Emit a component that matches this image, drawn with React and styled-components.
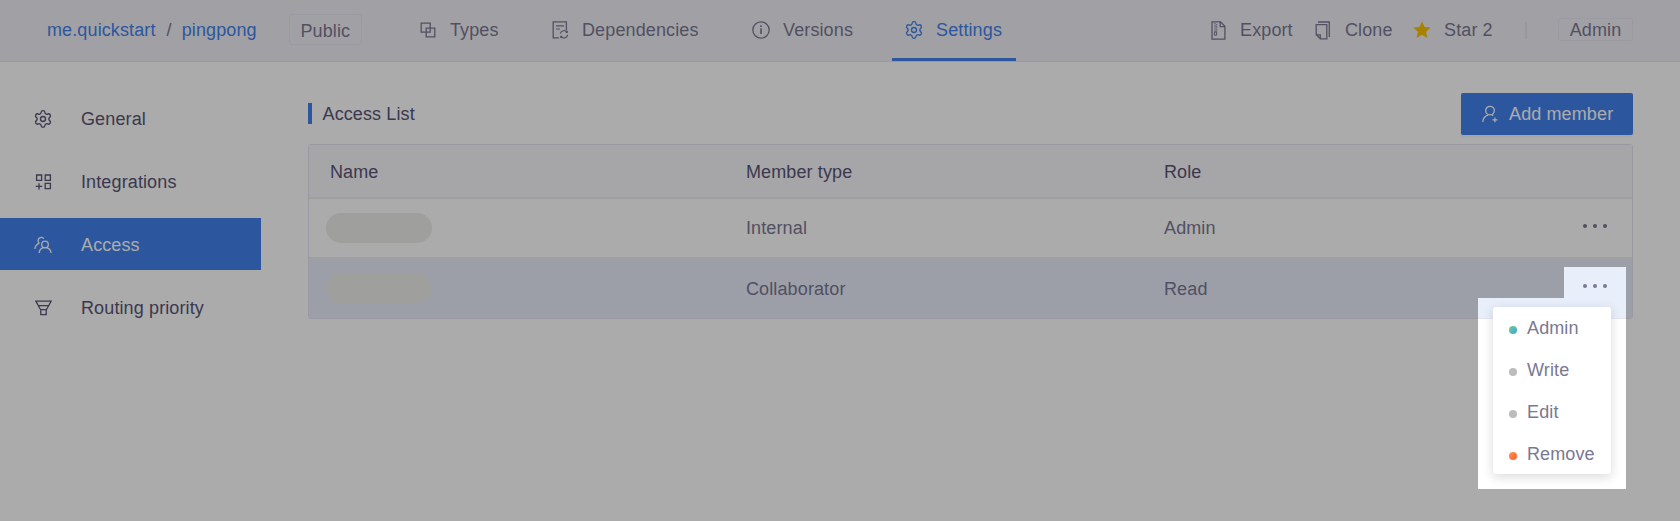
import React from "react";
import styled, { createGlobalStyle, css } from "styled-components";
import { Settings } from "lucide-react";

const Global = createGlobalStyle`
  * { box-sizing: border-box; }
  body {
    margin: 0;
    background: #fff;
    overflow: hidden;
    font-family: "Liberation Sans", Arial, sans-serif;
    font-size: 18px;
    line-height: 20px;
    letter-spacing: 0.12px;
    color: #7a7892;
  }
`;

const Page = styled.div`
  position: relative;
  width: 1680px;
  height: 521px;
  display: flex;
  flex-direction: column;
  white-space: nowrap;
`;

/* Header */
const Header = styled.header`
  display: flex;
  align-items: stretch;
  height: 62px;
  flex: none;
  background: #f1f0f7;
  border-bottom: 1px solid #e6e4f2;
`;

const Breadcrumb = styled.div`
  display: flex;
  align-items: center;
  width: 405px;
  padding: 0 0 1px 47px;
`;

const Crumb = styled.span`
  color: #4282ec;
`;

const Slash = styled.span`
  padding: 0 10px 0 11px;
`;

const Tag = styled.span`
  display: flex;
  align-items: center;
  justify-content: center;
  width: ${(p) => p.$w}px;
  height: ${(p) => p.$h}px;
  margin-bottom: 1px;
  padding-top: 1px;
  border: 1px solid #e7e5f1;
  border-radius: 3px;
`;

const PublicTag = styled(Tag)`
  margin-left: 32px;
  padding-top: 3px;
`;

const Tabs = styled.nav`
  display: flex;
  gap: 25px;
`;

const Tab = styled.a`
  display: flex;
  align-items: center;
  gap: 13px;
  width: ${(p) => p.$w}px;
  padding: 2px 0 0 14px;
  border-bottom: 3px solid transparent;
  ${(p) =>
    p.$active &&
    css`
      padding-left: 13px;
      color: #4282ec;
      border-bottom-color: #4282ec;
    `}
`;

const IconSlot = styled.span`
  display: flex;
  justify-content: center;
  width: 18px;
  flex: none;

  svg {
    flex: none;
  }
`;

const Actions = styled.div`
  display: flex;
  align-items: center;
  margin-left: auto;
  padding: 0 47px 1px 0;
`;

const Action = styled.a`
  display: flex;
  align-items: center;
  gap: 13px;
  width: ${(p) => p.$w}px;
`;

const Divider = styled.span`
  width: 2px;
  height: 17px;
  margin-right: 31px;
  background: #e4e3ea;
`;

/* Body */
const Body = styled.div`
  display: flex;
  flex: 1;
`;

const Sidebar = styled.aside`
  display: flex;
  flex-direction: column;
  gap: 11px;
  width: 261px;
  padding-top: 30px;
`;

const SideItem = styled.a`
  display: flex;
  align-items: center;
  gap: 29px;
  height: 52px;
  padding: 2px 0 0 34px;
  color: ${(p) => (p.$active ? "#fff" : "#585477")};
  background: ${(p) => (p.$active ? "#4282ec" : "transparent")};
`;

const Main = styled.main`
  flex: 1;
  padding: 31px 47px 0 47px;
`;

const TitleBar = styled.div`
  display: flex;
  align-items: flex-start;
  justify-content: space-between;
  height: 42px;
  margin-bottom: 9px;
`;

const Title = styled.h1`
  margin: 10px 0 0;
  font-size: 18px;
  font-weight: 400;
  line-height: 20px;
  padding: 1px 0 0 10.5px;
  border-left: 4px solid #4282ec;
  color: #585477;
`;

const AddButton = styled.button`
  display: flex;
  align-items: center;
  gap: 10px;
  width: 172px;
  height: 42px;
  padding: 0 0 0 20px;
  border: 0;
  border-radius: 2px;
  background: #4282ec;
  box-shadow: 0 2px 2px rgba(0, 0, 0, 0.04);
  color: #fff;
  font: inherit;
  letter-spacing: inherit;
`;

const Table = styled.div`
  border: 1px solid #e6e4f2;
  border-radius: 3px;
`;

const Row = styled.div`
  display: grid;
  grid-template-columns: 416px 418px 1fr 58px;
  align-items: center;
  height: ${(p) => p.$h}px;
  padding: ${(p) => p.$top || 0}px 0 0 21px;
  background: ${(p) => p.$bg || "#fff"};
  border-bottom: ${(p) => (p.$last ? "0" : "2px solid #eeedf1")};
  color: ${(p) => (p.$head ? "#585477" : "#7a7892")};
`;

const NamePill = styled.span`
  width: 106px;
  height: 30px;
  margin: ${(p) => p.$shift || 0}px 0 0 -4px;
  border-radius: 15px;
  background: #ededec;
`;

const More = styled.span`
  position: relative;
  display: flex;
  gap: 6px;
  margin: ${(p) => p.$shift}px 0 0 9px;
`;

const MoreDot = styled.i`
  width: 4px;
  height: 4px;
  border-radius: 50%;
  background: #7a7892;
`;

const Menu = styled.div`
  position: absolute;
  top: 23px;
  right: 21px;
  width: 118px;
  height: 167px;
  border-radius: 3px;
  background: #fff;
  box-shadow: 0 3px 12px rgba(0, 0, 0, 0.15);
`;

const MenuItem = styled.div`
  display: flex;
  align-items: center;
  gap: 10px;
  height: 42px;
  padding-left: 16px;
`;

const Status = styled.i`
  width: 8px;
  height: 8px;
  margin-top: 4px;
  border-radius: 50%;
  background: ${(p) => p.$fill};
`;

/* Dims the page except for the row's action button and its menu */
const Spotlight = styled.div`
  position: absolute;
  inset: 0;
  background: rgba(0, 0, 0, 0.33);
  pointer-events: none;
  clip-path: polygon(
    evenodd,
    0 0, 1680px 0, 1680px 521px, 0 521px, 0 0,
    1564px 267px, 1626px 267px, 1626px 489px, 1478px 489px, 1478px 298px, 1564px 298px, 1564px 267px,
    0 0
  );
`;

const Svg = ({ w = 18, h = 18, children }) => (
  <svg width={w} height={h} viewBox={`0 0 ${w} ${h}`} fill="none" stroke="currentColor" strokeWidth="1.3">
    {children}
  </svg>
);

const GearIcon = () => <Settings size={20} strokeWidth={1.6} />;

const TypesIcon = () => (
  <Svg w={16} h={16}>
    <path d="M1.2 1.2h9v9h-9zM6.2 6.2h8.6v8.6H6.2z" />
  </Svg>
);

const DependenciesIcon = () => (
  <Svg w={16} h={18}>
    <path d="M7 16.8H1.2V.9h13.2v8.3M4 4.9h8" />
    <path d="M4 8h4" strokeWidth="1" />
    <path d="M8.4 12.6a3.7 3.7 0 0 1 6.7-1.3M15.6 13.8a3.7 3.7 0 0 1-6.7 1.6M15.2 9.8v1.6h-1.5M8.8 16.9v-1.6h1.5" strokeWidth="1.2" />
  </Svg>
);

const InfoIcon = () => (
  <Svg>
    <circle cx="9" cy="9" r="8.2" />
    <path d="M9 7.3v5.8M9 4.3v1.6" strokeWidth="1.6" />
  </Svg>
);

const ExportIcon = () => (
  <Svg w={15} h={19}>
    <path d="M1 .8h8.6l4.3 4.4v13H1zM9.2.8v4.8h4.7" />
    <path d="M4 2.2v9M5.6 3.2v8" strokeWidth="1.4" strokeDasharray="1.1 1" />
    <path d="M3.4 11h2.2v3.2H3.4z" strokeWidth="1" />
  </Svg>
);

const CloneIcon = () => (
  <Svg w={16} h={19}>
    <path d="M3 1h11.3v15" />
    <path d="M1.2 3.7h10.6v14.1H5.3l-4.1-4zM1.2 13.8h4.1v4" />
  </Svg>
);

const StarIcon = () => (
  <svg width="18" height="18" viewBox="0 0 18 18" fill="#fdc000">
    <path d="M9 .3l2.5 5.6 6.2.7-4.6 4.2 1.3 6.1L9 13.8l-5.4 3.1 1.3-6.1L.3 6.6l6.2-.7z" />
  </svg>
);

const IntegrationsIcon = () => (
  <Svg w={17} h={16}>
    <path d="M1.6 1h5v5.4h-5zM10.2 1h5.2v5.4h-5.2zM10.2 9.3h5.2v5.4h-5.2zM.8 12.4h6.4M4 9.2v6.4" />
  </Svg>
);

const AccessIcon = () => (
  <Svg w={18} h={18}>
    <circle cx="11" cy="8.4" r="3.3" />
    <path d="M5.2 17c.2-3.2 2.4-5.3 5.8-5.3s5.7 2.1 6.1 5.3M9.8 2.6A3.3 3.3 0 0 0 4 4.6c0 1.2.5 2 1.4 2.6M5.4 7.2C2.6 8.4 1.2 10 .9 13" />
  </Svg>
);

const RoutingIcon = () => (
  <Svg w={17} h={16}>
    <path d="M.8 1.1h15.4L11.4 9.7H5.6zM3.4 5.6h10.2M5.8 9.7v5h5.4v-5" />
  </Svg>
);

const AddUserIcon = () => (
  <Svg w={16} h={18}>
    <circle cx="8" cy="5.6" r="4.3" />
    <path d="M.8 17c.2-3.8 2.2-6.2 5.4-7.2M9.6 9.6l1.8 1M10.4 14.8h5M12.9 12.4v4.8" />
  </Svg>
);

const tabs = [
  { label: "Types", w: 107, icon: <TypesIcon /> },
  { label: "Dependencies", w: 176, icon: <DependenciesIcon /> },
  { label: "Versions", w: 129, icon: <InfoIcon /> },
  { label: "Settings", w: 124, icon: <GearIcon />, active: true },
];

const sideItems = [
  { label: "General", icon: <GearIcon /> },
  { label: "Integrations", icon: <IntegrationsIcon /> },
  { label: "Access", icon: <AccessIcon />, active: true },
  { label: "Routing priority", icon: <RoutingIcon /> },
];

const roles = [
  { label: "Admin", fill: "linear-gradient(135deg, #74cd8e, #38a5e0)" },
  { label: "Write", fill: "#bcbcbc" },
  { label: "Edit", fill: "#bcbcbc" },
  { label: "Remove", fill: "linear-gradient(135deg, #ff9350, #fa5f28)" },
];

const MoreButton = ({ shift, children }) => (
  <More $shift={shift}>
    <MoreDot />
    <MoreDot />
    <MoreDot />
    {children}
  </More>
);

export default function App() {
  return (
    <>
      <Global />
      <Page>
        <Header>
          <Breadcrumb>
            <Crumb>me.quickstart</Crumb>
            <Slash>/</Slash>
            <Crumb>pingpong</Crumb>
            <PublicTag $w={73} $h={31}>Public</PublicTag>
          </Breadcrumb>
          <Tabs>
            {tabs.map((t) => (
              <Tab key={t.label} $w={t.w} $active={t.active}>
                <IconSlot>{t.icon}</IconSlot>
                {t.label}
              </Tab>
            ))}
          </Tabs>
          <Actions>
            <Action $w={105}>
              <IconSlot><ExportIcon /></IconSlot>
              Export
            </Action>
            <Action $w={99}>
              <IconSlot><CloneIcon /></IconSlot>
              Clone
            </Action>
            <Action $w={112}>
              <IconSlot><StarIcon /></IconSlot>
              Star 2
            </Action>
            <Divider />
            <Tag $w={75} $h={23}>Admin</Tag>
          </Actions>
        </Header>
        <Body>
          <Sidebar>
            {sideItems.map((s) => (
              <SideItem key={s.label} $active={s.active}>
                <IconSlot>{s.icon}</IconSlot>
                {s.label}
              </SideItem>
            ))}
          </Sidebar>
          <Main>
            <TitleBar>
              <Title>Access List</Title>
              <AddButton>
                <IconSlot><AddUserIcon /></IconSlot>
                Add member
              </AddButton>
            </TitleBar>
            <Table>
              <Row $h={54} $top={2} $bg="#f8f8fb" $head>
                <span>Name</span>
                <span>Member type</span>
                <span>Role</span>
              </Row>
              <Row $h={60}>
                <NamePill />
                <span>Internal</span>
                <span>Admin</span>
                <MoreButton shift={-4} />
              </Row>
              <Row $h={59} $top={1} $bg="#e9eefb" $last>
                <NamePill $shift={-2} />
                <span>Collaborator</span>
                <span>Read</span>
                <MoreButton shift={-6}>
                  <Menu>
                    {roles.map((r) => (
                      <MenuItem key={r.label}>
                        <Status $fill={r.fill} />
                        {r.label}
                      </MenuItem>
                    ))}
                  </Menu>
                </MoreButton>
              </Row>
            </Table>
          </Main>
        </Body>
        <Spotlight />
      </Page>
    </>
  );
}
